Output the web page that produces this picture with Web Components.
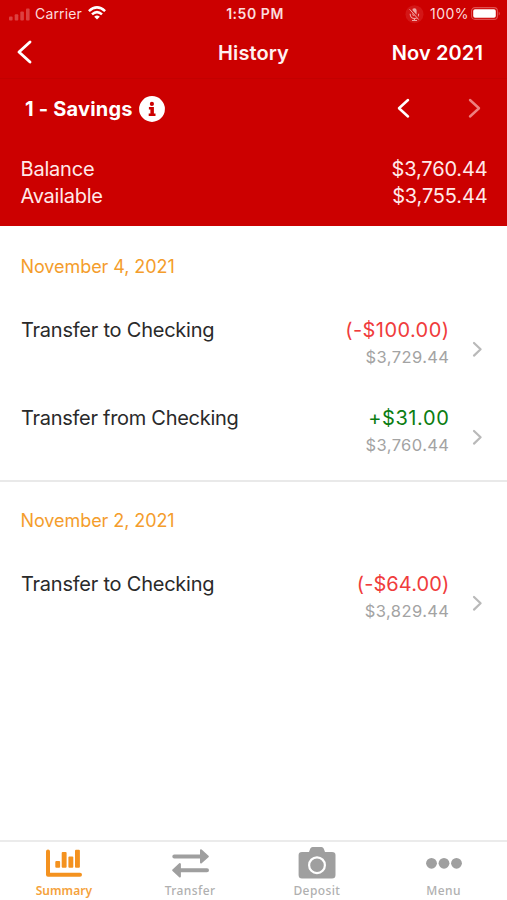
<!DOCTYPE html>
<html lang="en">
<head>
<meta charset="utf-8">
<title>History</title>
<style>
html,body{margin:0;height:100%}
body{font-family:Inter,"Liberation Sans",sans-serif;background:#fff;overflow:hidden}
</style>
</head>
<body>
<bank-app></bank-app>
<script>
const define = (name, render) => customElements.define(name, class extends HTMLElement {
  connectedCallback() {
    if (this.shadowRoot) return;
    this.attachShadow({ mode: 'open' }).innerHTML = render(this);
  }
});
const attr = (el, n) => el.getAttribute(n) || '';

define('chevron-icon', el => `
<style>:host{display:block;line-height:0;flex:none}svg{display:block;overflow:visible}</style>
<svg width="${attr(el,'w')}" height="${attr(el,'h')}" fill="none" stroke="currentColor" stroke-width="${attr(el,'stroke')}" stroke-linecap="round" stroke-linejoin="round">
<path d="${attr(el,'dir') === 'left'
  ? `M${attr(el,'w')} 0L0 ${attr(el,'h') / 2}L${attr(el,'w')} ${attr(el,'h')}`
  : `M0 0L${attr(el,'w')} ${attr(el,'h') / 2}L0 ${attr(el,'h')}`}"/></svg>`);

define('status-bar', () => `
<style>
:host{display:grid;grid-template-columns:1fr auto 1fr;align-items:center;height:28px;padding:0 6px 0 9px;box-sizing:border-box;color:#fbdcdc;font-size:14px;line-height:28px;white-space:nowrap}
div{display:flex;align-items:center}
.r{justify-content:flex-end}
svg{display:block;flex:none}
.time{font-size:14px;font-weight:600;letter-spacing:.55px}
.car{letter-spacing:.15px;margin-left:5px}
.wifi{margin:-3px 0 0 6px}
.pct{letter-spacing:.45px;margin:0 2px 0 6px}
.bat{margin-top:-2px}
</style>
<div>
<svg width="21" height="13" fill="#dc4141"><rect y="8.5" width="3.6" height="4" rx="1"/><rect x="5.7" y="6.2" width="3.6" height="6.3" rx="1"/><rect x="11.3" y="3.6" width="3.6" height="8.9" rx="1"/><rect x="17" y="0.5" width="3.6" height="12" rx="1"/></svg>
<span class="car">Carrier</span>
<svg class="wifi" width="18" height="14" viewBox="0 0 18 14" fill="none" stroke="#fff" stroke-width="2.5"><path d="M.9 5.2Q9-2.4 17.1 5.2"/><path d="M4 8.4Q9 3.8 14 8.4"/><path d="M9 13.6L6.2 10.7Q9 8.3 11.8 10.7Z" fill="#fff" stroke="none"/></svg>
</div>
<span class="time">1:50 PM</span>
<div class="r">
<svg width="19" height="19" viewBox="0 0 19 19"><circle cx="9.5" cy="9.2" r="9" fill="#d31616"/><rect x="7.2" y="3.2" width="4.4" height="7.8" rx="2.2" fill="#f0a3a3"/><path d="M5.2 8.7v.6a4.2 4.2 0 0 0 8.4 0v-.6M9.4 13.500v1.700M7 15.500h5" fill="none" stroke="#f0a3a3" stroke-width="1.1"/><path d="M4.800 3.900l9.200 10.200" stroke="#d31616" stroke-width="2.200"/><path d="M4.600 4.300l9 10.200" stroke="#f0a3a3" stroke-width="1"/></svg>
<span class="pct">100%</span>
<svg class="bat" width="30" height="13" viewBox="0 0 30 13"><rect x=".6" y=".6" width="25.8" height="11.8" rx="3.4" fill="none" stroke="#e05050" stroke-width="1.1"/><rect x="2.2" y="2.2" width="22.6" height="8.600" rx="1.800" fill="#fff"/><path d="M27.700 4.400q2.200 2.100 0 4.200z" fill="#e05050"/></svg>
</div>`);

define('nav-bar', el => `
<style>
:host{display:grid;grid-template-columns:1fr auto 1fr;align-items:center;height:50px;padding:0 24px 0 19px;color:#fff;border-bottom:1px solid #c30000;font-size:20px;font-weight:600;line-height:49px;white-space:nowrap}
.title{letter-spacing:.08px;color:#fff0f0;padding-left:5px}
.month{justify-self:end;letter-spacing:.12px}
chevron-icon{margin-bottom:2px}
</style>
<chevron-icon dir="left" w="11" h="20" stroke="2.9"></chevron-icon>
<span class="title"><slot name="title"></slot></span>
<span class="month"><slot name="month"></slot></span>`);

define('account-header', el => `
<style>
:host{display:flex;align-items:center;height:60px;padding:0 28.5px 0 25px;color:#fff}
.name{font-size:20px;font-weight:700;letter-spacing:.2px;white-space:nowrap}
.info{display:block;margin:-1px 0 0 6px}
.nav{display:flex;gap:62px;margin:-2px 0 0 auto}
chevron-icon:last-child{color:#ee8080}
</style>
<span class="name"><slot></slot></span>
<svg class="info" width="26" height="26" viewBox="0 0 26 26"><circle cx="13" cy="13" r="12.9" fill="#fff"/><g fill="#c00"><circle cx="12.9" cy="7.9" r="2.1"/><path d="M9.9 11h5v6.600h1.600v2.400H9.700v-2.400h1.700v-4.200H9.900z"/></g></svg>
<span class="nav"><chevron-icon dir="left" w="9" h="16.500" stroke="2.500"></chevron-icon><chevron-icon w="9" h="16.500" stroke="2.400"></chevron-icon></span>`);

define('balance-line', el => `
<style>
:host{display:flex;justify-content:space-between;padding:0 19.5px 0 20.5px;font-size:20px;line-height:27.500px;color:#ffe9e9}
.l{letter-spacing:${attr(el,'track')}}.v{letter-spacing:-.15px}
</style><span class="l">${attr(el,'label')}</span><span class="v"><slot></slot></span>`);

define('day-section', el => `
<style>
:host{display:block;border-bottom:2px solid ${el.hasAttribute('last') ? 'transparent' : '#e9e9e9'}}
h2{margin:0;height:78px;box-sizing:border-box;padding:0 20.5px;font-size:18px;font-weight:400;line-height:77.500px;letter-spacing:-.07px;color:#f49d2c}
</style><h2>${attr(el,'date')}</h2><slot></slot>`);

define('transaction-row', el => `
<style>
:host{display:flex;height:88px;padding:0 26px 0 21px;box-sizing:border-box;color:#2a2a2a}
:host(:last-of-type){height:86px}
.name{font-size:20px;line-height:48px;letter-spacing:${attr(el,'track')};white-space:nowrap}
.nums{display:flex;flex-direction:column;align-items:flex-end;margin-left:auto}
.amt{font-size:20px;line-height:27px;margin-top:10.500px;letter-spacing:${attr(el,'amt-track')};color:${attr(el,'kind') === 'in' ? '#0b7d12' : '#f03c3c'}}
.bal{font-size:16.500px;line-height:27px;letter-spacing:.4px;color:#a3a3a3}
chevron-icon{margin:36.500px 0 0 25px;color:#b9b9b9}
</style>
<span class="name"><slot></slot></span>
<span class="nums"><span class="amt">${attr(el,'amount')}</span><span class="bal">${attr(el,'balance')}</span></span>
<chevron-icon w="6.6" h="12.600" stroke="2.200"></chevron-icon>`);

const icons = {
  chart: '<path fill="none" stroke="currentColor" stroke-width="4" stroke-linecap="round" stroke-linejoin="round" d="M4 5.500v23.200h32"/><g fill="currentColor"><rect x="11.300" y="15" width="4.800" height="6.800" rx="1"/><rect x="17.700" y="6" width="4.900" height="15.800" rx="1"/><rect x="24.400" y="10.600" width="4.900" height="11.200" rx="1"/><rect x="31" y="3.700" width="4.900" height="18.100" rx="1"/></g>',
  transfer: '<g stroke="currentColor" stroke-width="4" stroke-linecap="round"><path d="M3.300 10.400h27M8 24.300h28"/></g><g fill="currentColor" stroke="currentColor" stroke-width="2" stroke-linejoin="round"><path d="M30 4.200v12.400L36.800 10.400zM8.900 18.100v12.400L2.200 24.300z"/></g>',
  camera: '<path fill="currentColor" d="M4 6h7l1.200-3.200Q12.800 1 14.600 1h8.800q1.800 0 2.400 1.800L27 6h7Q37.500 6 37.500 9v20q0 3.500-3.500 3.500H4Q.6 32.500.6 29V9Q.6 6 4 6z"/><circle cx="19" cy="19.200" r="7.900" fill="currentColor" stroke="#fff" stroke-width="2.200"/>',
  dots: '<g fill="currentColor"><circle cx="6.500" cy="17.300" r="5.400"/><circle cx="19" cy="17.300" r="5.400"/><circle cx="31.500" cy="17.300" r="5.400"/></g>'
};
define('tab-item', el => `
<style>
:host{display:flex;flex-direction:column;align-items:center;flex:1;padding-top:4px;color:#9f9f9f}
:host([active]){color:#f4921f}
svg{display:block;flex:none}
span{font:500 12px/18px "Noto Sans","Open Sans",sans-serif;letter-spacing:.4px;margin-top:2px;color:#b0b0b0}
:host([active]) span{font-weight:600;letter-spacing:.05px;color:#f5a23c;padding-left:1px}
</style>
<svg width="38" height="34" viewBox="0 0 38 34">${icons[attr(el,'icon')]}</svg><span><slot></slot></span>`);

define('tab-bar', () => `
<style>:host{display:flex;height:60px;box-sizing:border-box;border-top:2px solid #ebebeb;background:#fff;flex:none}</style><slot></slot>`);

define('bank-app', () => `
<style>
:host{display:flex;flex-direction:column;height:100vh;background:#fff}
header{background:#c00;height:226px;margin-bottom:2px;flex:none}
.balances{padding-top:16.500px}
main{flex:1}
</style>
<header>
<status-bar></status-bar>
<nav-bar><span slot="title">History</span><span slot="month">Nov 2021</span></nav-bar>
<account-header>1 - Savings</account-header>
<div class="balances">
<balance-line label="Balance" track="-.2px">$3,760.44</balance-line>
<balance-line label="Available" track="-.25px">$3,755.44</balance-line>
</div>
</header>
<main>
<day-section date="November 4, 2021">
<transaction-row track="-.23px" amount="(-$100.00)" amt-track=".42px" balance="$3,729.44">Transfer to Checking</transaction-row>
<transaction-row track="-.28px" kind="in" amount="+$31.00" amt-track=".6px" balance="$3,760.44">Transfer from Checking</transaction-row>
</day-section>
<day-section date="November 2, 2021" last>
<transaction-row track="-.23px" amount="(-$64.00)" amt-track=".1px" balance="$3,829.44">Transfer to Checking</transaction-row>
</day-section>
</main>
<tab-bar>
<tab-item icon="chart" active>Summary</tab-item>
<tab-item icon="transfer">Transfer</tab-item>
<tab-item icon="camera">Deposit</tab-item>
<tab-item icon="dots">Menu</tab-item>
</tab-bar>`);
</script>
</body>
</html>
